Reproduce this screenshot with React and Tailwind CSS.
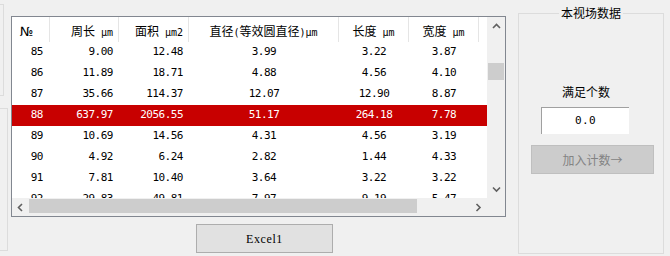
import React from "react";

const rows = [
  ["85", "9.00", "12.48", "3.99", "3.22", "3.87"],
  ["86", "11.89", "18.71", "4.88", "4.56", "4.10"],
  ["87", "35.66", "114.37", "12.07", "12.90", "8.87"],
  ["88", "637.97", "2056.55", "51.17", "264.18", "7.78"],
  ["89", "10.69", "14.56", "4.31", "4.56", "3.19"],
  ["90", "4.92", "6.24", "2.82", "1.44", "4.33"],
  ["91", "7.81", "10.40", "3.64", "3.22", "3.22"],
  ["92", "29.83", "49.81", "7.97", "9.19", "5.47"],
];

const bodyCols = [
  "w-[38px] justify-end pr-[7px]",
  "w-[69px] justify-end pr-[6px]",
  "w-[70px] justify-end pr-[6px]",
  "w-[150px] justify-center",
  "w-[70px] justify-center",
  "w-[70px] justify-center",
];

const cjk = "font-['Noto_Sans_CJK_SC',sans-serif]";
const mono = "font-['DejaVu_Sans_Mono',monospace]";

function Chevron({ dir }) {
  const pts = {
    up: "1,5 4.5,1.5 8,5",
    down: "1,1.5 4.5,5 8,1.5",
    left: "5,1 1.5,4.5 5,8",
    right: "1.5,1 5,4.5 1.5,8",
  }[dir];
  const vert = dir === "up" || dir === "down";
  return (
    <svg width={vert ? 9 : 7} height={vert ? 7 : 9} viewBox={vert ? "0 0 9 7" : "0 0 7 9"}>
      <polyline points={pts} fill="none" stroke="#606060" strokeWidth="1.6" />
    </svg>
  );
}

function HeadCell({ cls, children }) {
  return (
    <div className={`h-[25px] flex items-center pt-[4px] border-r border-[#e5e5e5] ${cls}`}>
      <span className="whitespace-nowrap leading-[16px]">{children}</span>
    </div>
  );
}

export default function App() {
  return (
    <div className="w-[670px] h-[256px] bg-[#f0f0f0] flex overflow-hidden text-black">
      {/* left clipped group boxes */}
      <div className="w-[11px] shrink-0 flex flex-col">
        <div className="mt-[4px] h-[92px] w-[4px] border-t border-r border-b border-[#dcdcdc]" />
        <div className="mt-[12px] h-[143px] w-[8px] border-t border-r border-b border-[#dcdcdc]" />
      </div>

      {/* middle: grid + button */}
      <div className="w-[495px] shrink-0 flex flex-col">
        <div className="mt-[16px] h-[201px] border border-[#828790] flex flex-col bg-[#f0f0f0]">
          <div className="h-[181px] flex">
            <div className="w-[475px] h-[181px] bg-white overflow-hidden">
              {/* header */}
              <div className={`flex h-[25px] text-[12px] ${cjk}`}>
                <HeadCell cls="w-[38px] justify-start pl-[8px]">
                  <span className="font-['DejaVu_Sans',sans-serif] text-[13px] tracking-[-1px]">№</span>
                </HeadCell>
                <HeadCell cls="w-[69px] justify-end pr-[5px]">
                  周长<span className={`${mono} text-[10px]`}> μm</span>
                </HeadCell>
                <HeadCell cls="w-[70px] justify-end pr-[5px]">
                  面积<span className={`${mono} text-[10px]`}> μm2</span>
                </HeadCell>
                <HeadCell cls="w-[150px] justify-center">
                  直径<span className={`${mono} text-[10px]`}>(</span>等效圆直径<span className={`${mono} text-[10px]`}>)μm</span>
                </HeadCell>
                <HeadCell cls="w-[70px] justify-center">
                  长度<span className={`${mono} text-[10px]`}> μm</span>
                </HeadCell>
                <HeadCell cls="w-[70px] justify-center">
                  宽度<span className={`${mono} text-[10px]`}> μm</span>
                </HeadCell>
              </div>
              {/* body */}
              {rows.map((r) => {
                const sel = r[0] === "88";
                return (
                  <div
                    key={r[0]}
                    className={`flex h-[21px] ${mono} text-[11px] tracking-[-0.5px] ${sel ? "bg-[#c80000] text-white" : "text-black"}`}
                  >
                    {r.map((v, i) => (
                      <div key={i} className={`h-[21px] flex items-center whitespace-nowrap ${bodyCols[i]}`}>
                        {v}
                      </div>
                    ))}
                  </div>
                );
              })}
            </div>
            {/* vertical scrollbar */}
            <div className="w-[18px] h-[181px] bg-[#f0f0f0] flex flex-col">
              <div className="h-[17px] flex items-center justify-center pt-[2px]">
                <Chevron dir="up" />
              </div>
              <div className="h-[29px]" />
              <div className="h-[17px] mx-[1px] bg-[#cdcdcd]" />
              <div className="flex-1" />
              <div className="h-[17px] flex items-center justify-center">
                <Chevron dir="down" />
              </div>
            </div>
          </div>
          {/* horizontal scrollbar */}
          <div className="h-[18px] flex">
            <div className="w-[475px] flex">
              <div className="w-[17px] flex items-center justify-center">
                <Chevron dir="left" />
              </div>
              <div className="w-[388px] my-[1px] mb-[3px] bg-[#cdcdcd]" />
              <div className="flex-1" />
              <div className="w-[17px] flex items-center justify-center">
                <Chevron dir="right" />
              </div>
            </div>
            <div className="w-[18px]" />
          </div>
        </div>
        <div
          className="mt-[7px] ml-[185px] w-[137px] h-[29px] bg-[#e1e1e1] border border-[#adadad] flex items-center justify-center font-['Liberation_Serif',serif] text-[12px] tracking-[0.6px]"
        >
          Excel1
        </div>
      </div>

      {/* right group box */}
      <div className="ml-[12px] w-[146px] shrink-0 flex flex-col">
        <div className="mt-[13px] h-[241px] border border-[#dcdcdc] flex flex-col">
          <div className={`-mt-[9px] self-center px-[2px] bg-[#f0f0f0] text-[12px] leading-[16px] ${cjk}`}>
            本视场数据
          </div>
          <div className={`mt-[63px] pl-[43px] text-[12px] leading-[16px] ${cjk}`}>满足个数</div>
          <div className={`mt-[7px] ml-[22px] w-[88px] h-[27px] bg-white border-t border-l border-[#a0a0a0] flex items-center justify-center ${mono} text-[11px] tracking-[0.4px]`}>
            0.0
          </div>
          <div className={`mt-[11px] ml-[12px] w-[123px] h-[29px] bg-[#cccccc] border border-[#bfbfbf] flex items-center justify-center text-[#838383] text-[12px] ${cjk}`}>
            加入计数→
          </div>
        </div>
      </div>
    </div>
  );
}
